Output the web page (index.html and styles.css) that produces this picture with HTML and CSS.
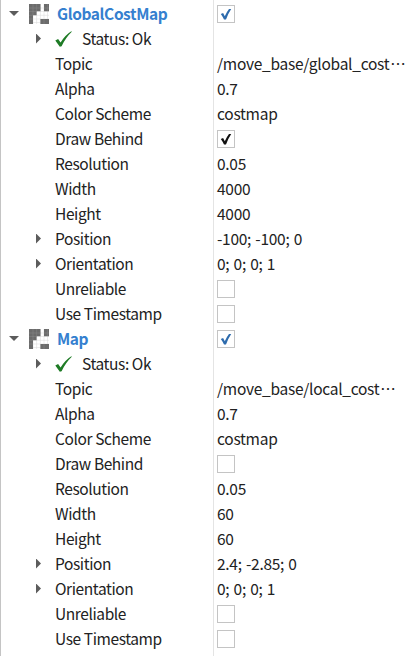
FILE: index.html
```
<!DOCTYPE html>
<html lang="en">
<head>
<meta charset="utf-8">
<title>Displays</title>
<link rel="stylesheet" href="styles.css">
</head>
<body>
<svg class="defs" aria-hidden="true">
  <symbol id="map" viewBox="0 0 20 20">
    <path fill="none" stroke="#d8d8d8" stroke-width=".5" d="M4 7V20M7.600 7V20M11.400 0V20M15 0V20M18.500 0V20M4 4H20M4 7.500H20M4 11.300H20M4 15H20M4 18.500H20"/>
    <path fill="#6b6b6b" d="M0 0H11.500V7.200H7.600V11.300H4V20H0ZM15 0H20V7.200H15ZM11.400 15H20V20H11.400Z"/>
    <path fill="none" stroke="#8d8d8d" stroke-width=".4" d="M4 0V11M7.600 0V7M18.500 0V7M0 4H11.500M15 4H20M0 7.500H7.600M0 11.300H4M0 15H4M15 15V20"/>
  </symbol>
  <symbol id="ok" viewBox="0 0 17 16"><path fill="#1e7b25" d="M.3 9.500 3.100 8.100 5.600 11.600Q10 4.200 16.300.3L16.800.8Q10.800 6.500 6.600 15.200L4.800 15.700Z"/></symbol>
  <symbol id="tick" viewBox="0 0 16 16"><path fill="currentColor" d="M2.800 7.900 5.100 7.100 6.800 10.300Q8.500 6 11 2.900L13.200 2.900Q9.800 8 8 13.600L6 13.600Q4.600 10.300 2.800 7.900Z"/></symbol>
</svg>
<main class="tree">
  <section class="display">
    <div class="row title"><div class="name"><i class="arrow open"></i><svg class="map"><use href="#map"/></svg><span>GlobalCostMap</span></div><div class="value"><span class="box blue"><svg><use href="#tick"/></svg></span></div></div>
    <div class="row status"><div class="name"><i class="arrow"></i><svg class="ok"><use href="#ok"/></svg><span>Status: Ok</span></div><div class="value"></div></div>
    <div class="row"><div class="name">Topic</div><div class="value">/move_base/global_cost<span class="more">…</span></div></div>
    <div class="row"><div class="name">Alpha</div><div class="value">0.7</div></div>
    <div class="row"><div class="name">Color Scheme</div><div class="value">costmap</div></div>
    <div class="row"><div class="name">Draw Behind</div><div class="value"><span class="box"><svg><use href="#tick"/></svg></span></div></div>
    <div class="row"><div class="name">Resolution</div><div class="value">0.05</div></div>
    <div class="row"><div class="name">Width</div><div class="value">4000</div></div>
    <div class="row"><div class="name">Height</div><div class="value">4000</div></div>
    <div class="row group"><div class="name"><i class="arrow"></i>Position</div><div class="value">-100; -100; 0</div></div>
    <div class="row group"><div class="name"><i class="arrow"></i>Orientation</div><div class="value">0; 0; 0; 1</div></div>
    <div class="row"><div class="name">Unreliable</div><div class="value"><span class="box"></span></div></div>
    <div class="row"><div class="name">Use Timestamp</div><div class="value"><span class="box"></span></div></div>
  </section>
  <section class="display">
    <div class="row title"><div class="name"><i class="arrow open"></i><svg class="map"><use href="#map"/></svg><span>Map</span></div><div class="value"><span class="box blue"><svg><use href="#tick"/></svg></span></div></div>
    <div class="row status"><div class="name"><i class="arrow"></i><svg class="ok"><use href="#ok"/></svg><span>Status: Ok</span></div><div class="value"></div></div>
    <div class="row"><div class="name">Topic</div><div class="value">/move_base/local_cost<span class="more">…</span></div></div>
    <div class="row"><div class="name">Alpha</div><div class="value">0.7</div></div>
    <div class="row"><div class="name">Color Scheme</div><div class="value">costmap</div></div>
    <div class="row"><div class="name">Draw Behind</div><div class="value"><span class="box"></span></div></div>
    <div class="row"><div class="name">Resolution</div><div class="value">0.05</div></div>
    <div class="row"><div class="name">Width</div><div class="value">60</div></div>
    <div class="row"><div class="name">Height</div><div class="value">60</div></div>
    <div class="row group"><div class="name"><i class="arrow"></i>Position</div><div class="value">2.4; -2.85; 0</div></div>
    <div class="row group"><div class="name"><i class="arrow"></i>Orientation</div><div class="value">0; 0; 0; 1</div></div>
    <div class="row"><div class="name">Unreliable</div><div class="value"><span class="box"></span></div></div>
    <div class="row"><div class="name">Use Timestamp</div><div class="value"><span class="box"></span></div></div>
  </section>
</main>
</body>
</html>
```
FILE: styles.css
```
* { box-sizing: border-box; }
body {
  margin: 0;
  background: #fff;
  color: #222;
  font: 15.5px/25px "Noto Sans CJK SC", sans-serif;
  letter-spacing: -0.4px;
  overflow: hidden;
}
.defs { display: none; }
.tree {
  height: 656px;
  padding-top: 1px;
  border-left: 1px solid #c4c4c4;
  background: linear-gradient(#e4e4e4, #e4e4e4) 212px 0 / 1px 100% no-repeat;
}
.row { display: grid; grid-template-columns: 216px 1fr; height: 25px; }
.name, .value { display: flex; align-items: center; height: 25px; white-space: nowrap; }
.name { padding-left: 54px; }
.value { letter-spacing: -0.27px; word-spacing: 1px; }
.group .name, .status .name { padding-left: 35px; }
.title .name { padding-left: 8px; color: #3580cf; font-weight: 700; }
.arrow {
  flex: none;
  width: 5px;
  height: 10px;
  margin-right: 14px;
  background: #5c5c5c;
  clip-path: polygon(0 0, 100% 50%, 0 100%);
}
.arrow.open {
  width: 10px;
  height: 5px;
  margin-right: 10px;
  clip-path: polygon(0 0, 100% 0, 50% 100%);
}
.map { width: 20px; height: 20px; margin-right: 8px; }
.ok { width: 17px; height: 16px; margin-right: 10px; }
.more { margin-left: 1px; }
.box {
  width: 18px;
  height: 18px;
  border: 1px solid #c4c4c4;
  color: #111;
}
.box svg { display: block; width: 16px; height: 16px; }
.blue { color: #2d6bad; }
```
